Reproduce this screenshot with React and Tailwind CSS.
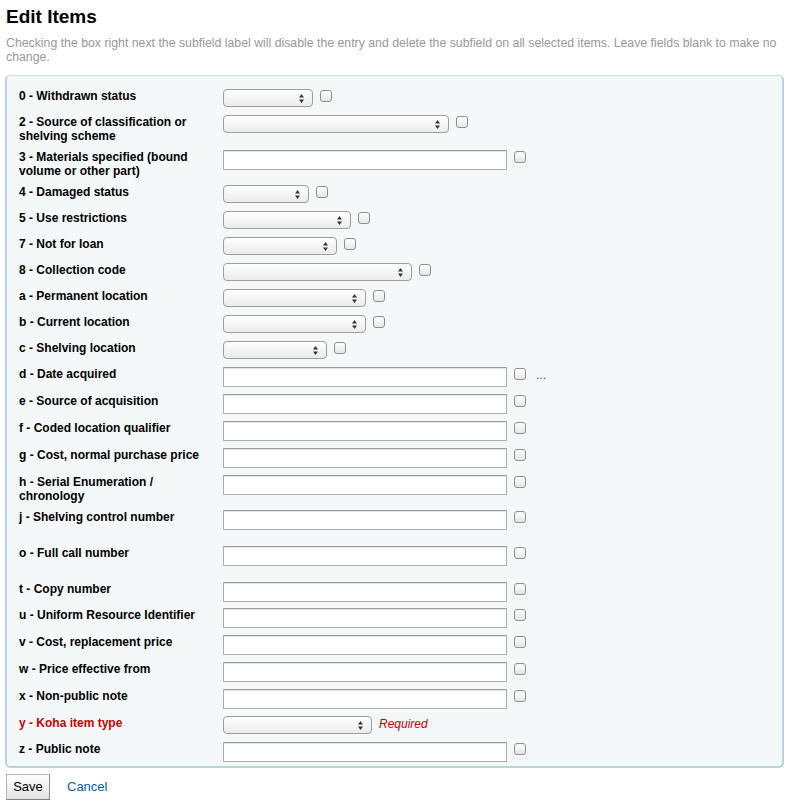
import React from "react";

const rows = [
  { l: "0 - Withdrawn status", t: "s", w: 90, h: 26 },
  { l: "2 - Source of classification or shelving scheme", t: "s", w: 226, h: 35 },
  { l: "3 - Materials specified (bound volume or other part)", t: "i", h: 35 },
  { l: "4 - Damaged status", t: "s", w: 86, h: 26 },
  { l: "5 - Use restrictions", t: "s", w: 128, h: 26 },
  { l: "7 - Not for loan", t: "s", w: 114, h: 26 },
  { l: "8 - Collection code", t: "s", w: 189, h: 26 },
  { l: "a - Permanent location", t: "s", w: 143, h: 26 },
  { l: "b - Current location", t: "s", w: 143, h: 26 },
  { l: "c - Shelving location", t: "s", w: 104, h: 26 },
  { l: "d - Date acquired", t: "i", h: 27, dots: true },
  { l: "e - Source of acquisition", t: "i", h: 27 },
  { l: "f - Coded location qualifier", t: "i", h: 27 },
  { l: "g - Cost, normal purchase price", t: "i", h: 27 },
  { l: "h - Serial Enumeration / chronology", t: "i", h: 35 },
  { l: "j - Shelving control number", t: "i", h: 36 },
  { l: "o - Full call number", t: "i", h: 36 },
  { l: "t - Copy number", t: "i", h: 26 },
  { l: "u - Uniform Resource Identifier", t: "i", h: 27 },
  { l: "v - Cost, replacement price", t: "i", h: 27 },
  { l: "w - Price effective from", t: "i", h: 27 },
  { l: "x - Non-public note", t: "i", h: 27 },
  { l: "y - Koha item type", t: "s", w: 149, h: 26, req: true },
  { l: "z - Public note", t: "i", h: 24 },
];

function Check() {
  return (
    <div className="mt-[1px] h-[12px] w-[12px] shrink-0 rounded-[3px] border border-[#8e8e8e] bg-gradient-to-b from-white to-[#e6e6e6] shadow-[inset_0_1px_0_#fff]" />
  );
}

function Select({ w }) {
  return (
    <div
      style={{ width: w }}
      className="relative h-[18px] shrink-0 rounded-[4px] border border-[#9d9d9d] bg-gradient-to-b from-white to-[#ebebeb] shadow-[0_1px_0_#f8f8f8]"
    >
      <svg
        className="absolute right-[8px] top-[4px]"
        width="5"
        height="9"
        viewBox="0 0 5 9"
      >
        <path d="M2.5 0 L5 3.5 L0 3.5 Z" fill="#333" />
        <path d="M0 5.5 L5 5.5 L2.5 9 Z" fill="#333" />
      </svg>
    </div>
  );
}

function Input() {
  return (
    <div className="h-[20px] w-[284px] shrink-0 border border-[#adadad] border-t-[#9a9a9a] bg-white shadow-[inset_0_1px_1px_#e4e4e4]" />
  );
}

export default function App() {
  return (
    <div className="min-h-[805px] bg-white font-['Liberation_Sans',Arial,sans-serif] text-black">
      <h1 className="pl-[6px] pt-[6px] text-[19px] font-bold leading-[22px]">Edit Items</h1>
      <p className="mt-[8px] pl-[6px] pr-[6px] text-[12.3px] leading-[14px] text-[#999]">
        Checking the box right next the subfield label will disable the entry and delete the subfield on all selected items. Leave fields blank to make no change.
      </p>
      <div className="ml-[5px] mt-[11px] w-[779px] rounded-[5px] border-2 border-[#b6d5d7] border-t border-t-[#c9e0e1] bg-[#f4f8f9] pl-[12px] pt-[13px]">
        {rows.map((r, i) => (
          <div key={i} style={{ height: r.h }} className="flex items-start">
            <div className="w-[204px] shrink-0">
              <div
                className={
                  "max-w-[182px] text-[12px] font-bold leading-[14px] " +
                  (r.req ? "text-[#cc0000]" : "text-black")
                }
              >
                {r.l}
              </div>
            </div>
            <div className="flex items-start gap-[7px]">
              {r.t === "s" ? <Select w={r.w} /> : <Input />}
              {r.req ? (
                <span className="text-[12px] italic leading-[16px] text-[#cc0000]">Required</span>
              ) : (
                <Check />
              )}
              {r.dots && (
                <span className="ml-[3px] text-[12px] leading-[16px] text-[#0055cc]">...</span>
              )}
            </div>
          </div>
        ))}
      </div>
      <div className="ml-[6px] mt-[6px] flex items-center gap-[17px]">
        <button className="h-[26px] w-[44px] border border-[#b5b5b5] border-b-[#7d7d7d] border-r-[#8a8a8a] bg-gradient-to-b from-white to-[#e3e3e3] text-[13px] leading-[24px] text-black">
          Save
        </button>
        <a className="text-[13px] text-[#0b5ca8]">Cancel</a>
      </div>
    </div>
  );
}
